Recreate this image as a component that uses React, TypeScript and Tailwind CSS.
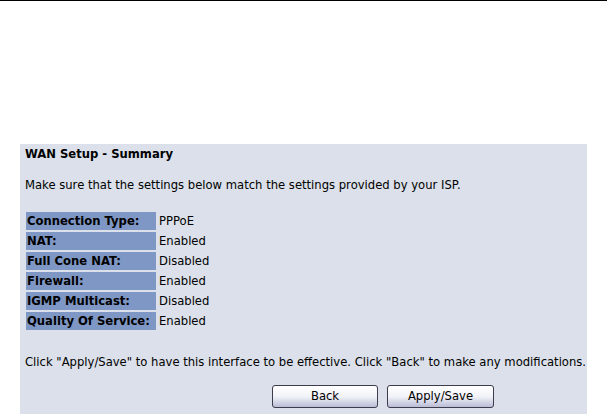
import React from "react";

const rows: [string, string][] = [
  ["Connection Type:", "PPPoE"],
  ["NAT:", "Enabled"],
  ["Full Cone NAT:", "Disabled"],
  ["Firewall:", "Enabled"],
  ["IGMP Multicast:", "Disabled"],
  ["Quality Of Service:", "Enabled"],
];

function Btn({ children, w }: { children: React.ReactNode; w: string }) {
  return (
    <button
      className={`${w} h-[23px] rounded-[3px] border border-[#3c3c4c] bg-gradient-to-b from-white via-[#f2f3f8] to-[#b9bdd6] text-[11.6px] text-black leading-none`}
    >
      {children}
    </button>
  );
}

export default function App() {
  return (
    <div
      className="w-[607px] h-[414px] bg-white overflow-hidden text-black"
      style={{ fontFamily: '"DejaVu Sans", sans-serif' }}
    >
      <div className="h-px bg-black w-full" />
      <div className="ml-[20px] mt-[143px] w-[567px] h-[270px] bg-[#dbe0ea] pl-[5px] pt-[3px] text-[11.6px] leading-[14px]">
        <div className="font-bold">WAN Setup - Summary</div>
        <div className="mt-[17px]">Make sure that the settings below match the settings provided by your ISP.</div>
        <table className="mt-[18px] border-separate border-spacing-[2px] -ml-[1px]">
          <tbody>
            {rows.map(([k, v]) => (
              <tr key={k}>
                <td className="w-[130px] h-[18px] bg-[#7f97c4] font-bold pl-[1px] py-0 whitespace-nowrap">{k}</td>
                <td className="pl-[1px] py-0">{v}</td>
              </tr>
            ))}
          </tbody>
        </table>
        <div className="mt-[23px] whitespace-nowrap">
          Click "Apply/Save" to have this interface to be effective. Click "Back" to make any modifications.
        </div>
        <div className="mt-[16px] flex gap-[9px] pl-[247px]">
          <Btn w="w-[106px]">Back</Btn>
          <Btn w="w-[107px]">Apply/Save</Btn>
        </div>
      </div>
    </div>
  );
}
